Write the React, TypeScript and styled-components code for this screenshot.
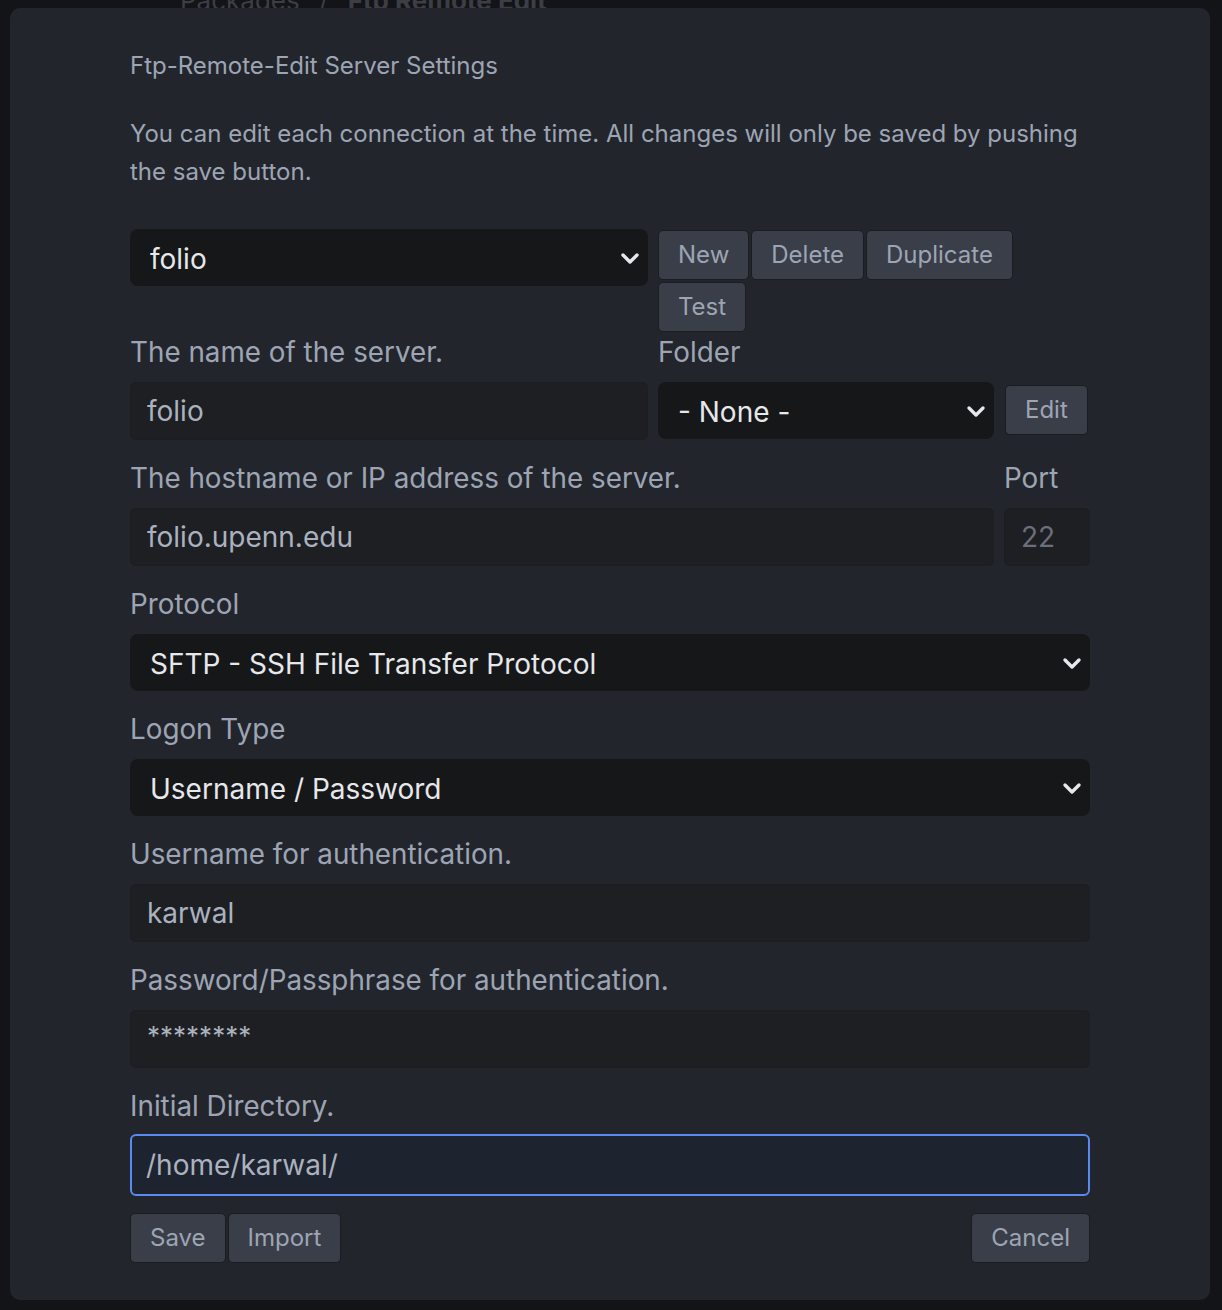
import styled, { createGlobalStyle } from "styled-components";

const GlobalStyle = createGlobalStyle`
  html, body {
    margin: 0;
    padding: 0;
    background: #131417;
  }
  body {
    font-family: Inter, "Noto Sans", "Liberation Sans", sans-serif;
  }
  * {
    box-sizing: border-box;
  }
`;

function Chevron() {
  return (
    <svg width="20" height="14" viewBox="0 0 20 14" aria-hidden="true">
      <polyline
        points="3,4 10,11 17,4"
        fill="none"
        stroke="#e6e8eb"
        strokeWidth="3.4"
        strokeLinecap="round"
        strokeLinejoin="round"
      />
    </svg>
  );
}

function Select({ value }: { value: string }) {
  return (
    <SelectBox>
      <span>{value}</span>
      <Chevron />
    </SelectBox>
  );
}

export default function App() {
  return (
    <Page>
      <GlobalStyle />
      <Backdrop>
        <Crumb>
          Packages <CrumbSep>/</CrumbSep> <strong>Ftp Remote Edit</strong>
        </Crumb>
      </Backdrop>

      <Modal>
        <Title>Ftp-Remote-Edit Server Settings</Title>
        <Intro>
          You can edit each connection at the time. All changes will only be saved by pushing
          the save button.
        </Intro>

        <TopRow>
          <Select value="folio" />
          <ButtonGroup>
            <Button>New</Button>
            <Button>Delete</Button>
            <Button>Duplicate</Button>
            <Button>Test</Button>
          </ButtonGroup>
        </TopRow>

        <SplitRow $columns="518px 336px 1fr">
          <Field>
            <Label>The name of the server.</Label>
            <Input defaultValue="folio" readOnly />
          </Field>
          <Field>
            <Label>Folder</Label>
            <Select value="- None -" />
          </Field>
          <EditCell>
            <Button>Edit</Button>
          </EditCell>
        </SplitRow>

        <SplitRow $columns="1fr 86px">
          <Field>
            <Label>The hostname or IP address of the server.</Label>
            <Input defaultValue="folio.upenn.edu" readOnly />
          </Field>
          <Field>
            <Label>Port</Label>
            <Input defaultValue="22" readOnly $muted />
          </Field>
        </SplitRow>

        <Field>
          <Label>Protocol</Label>
          <Select value="SFTP - SSH File Transfer Protocol" />
        </Field>

        <Field>
          <Label>Logon Type</Label>
          <Select value="Username / Password" />
        </Field>

        <Field>
          <Label>Username for authentication.</Label>
          <Input defaultValue="karwal" readOnly />
        </Field>

        <Field>
          <Label>Password/Passphrase for authentication.</Label>
          <Input defaultValue="********" readOnly $secret />
        </Field>

        <Field>
          <Label>Initial Directory.</Label>
          <Input defaultValue="/home/karwal/" readOnly $focused />
        </Field>

        <Footer>
          <FooterGroup>
            <Button>Save</Button>
            <Button>Import</Button>
          </FooterGroup>
          <Button>Cancel</Button>
        </Footer>
      </Modal>
    </Page>
  );
}

const Page = styled.div`
  position: relative;
  width: 1222px;
  height: 1310px;
  overflow: hidden;
  background: #131417;
`;

const Backdrop = styled.div`
  height: 100%;
  padding-left: 180px;
`;

const Crumb = styled.div`
  margin-top: -15px;
  font-size: 26px;
  line-height: 32px;
  color: #3b3e45;

  strong {
    font-weight: 700;
  }
`;

const CrumbSep = styled.span`
  margin: 0 12px;
`;

const Modal = styled.div`
  position: absolute;
  top: 8px;
  left: 10px;
  width: 1200px;
  height: 1292px;
  background: #23252c;
  border-radius: 10px;
  padding: 50px 120px 0 120px;
  display: flex;
  flex-direction: column;
`;

const Title = styled.div`
  font-size: 24px;
  line-height: 16px;
  color: #9da5b4;
`;

const Intro = styled.p`
  margin: 41px 0 0;
  font-size: 24px;
  line-height: 38px;
  color: #9da5b4;
`;

const TopRow = styled.div`
  margin-top: 38px;
  display: grid;
  grid-template-columns: 518px 1fr;
  column-gap: 10px;
  align-items: start;
`;

const ButtonGroup = styled.div`
  display: flex;
  flex-wrap: wrap;
  gap: 2px;
  padding-top: 1px;
`;

const Button = styled.button`
  height: 50px;
  padding: 0 19px;
  background: #3a3e49;
  border: 1px solid #1a1c20;
  border-radius: 5px;
  color: #9da5b4;
  font-family: inherit;
  font-size: 24px;
  line-height: 1;
  cursor: pointer;
`;

const SplitRow = styled.div<{ $columns: string }>`
  display: grid;
  grid-template-columns: ${({ $columns }) => $columns};
  column-gap: 10px;
`;

const Field = styled.div`
  display: flex;
  flex-direction: column;
  margin-bottom: 18px;
`;

const EditCell = styled.div`
  padding-top: 53px;
  display: flex;
  margin-left: 1px;
`;

const Label = styled.label`
  font-size: 27.8px;
  line-height: 40px;
  color: #9da5b4;
  margin-bottom: 10px;
  white-space: nowrap;
`;

const SelectBox = styled.div`
  height: 57px;
  display: flex;
  align-items: center;
  justify-content: space-between;
  padding: 3px 8px 0 20px;
  background: #161719;
  border-radius: 8px;
  color: #e6e8eb;
  font-size: 28px;

  svg {
    margin-top: -3px;
  }
`;

const Input = styled.input<{ $muted?: boolean; $secret?: boolean; $focused?: boolean }>`
  height: 58px;
  width: 100%;
  padding: ${({ $secret }) => ($secret ? "0 16px 8px" : "0 16px")};
  background: ${({ $focused }) => ($focused ? "#1e2330" : "#1d1f23")};
  border: ${({ $focused }) => ($focused ? "2px solid #5a8af0" : "1px solid #1b1d21")};
  border-radius: 6px;
  color: ${({ $muted }) => ($muted ? "#696f7b" : "#abb2bf")};
  font-family: inherit;
  font-size: ${({ $secret }) => ($secret ? "26px" : "28px")};
  outline: none;
  ${({ $focused }) => ($focused ? "height: 62px; margin-top: -2px; padding-left: 14px;" : "")}
`;

const Footer = styled.div`
  margin-top: -1px;
  display: flex;
  justify-content: space-between;
`;

const FooterGroup = styled.div`
  display: flex;
  gap: 2px;
`;
